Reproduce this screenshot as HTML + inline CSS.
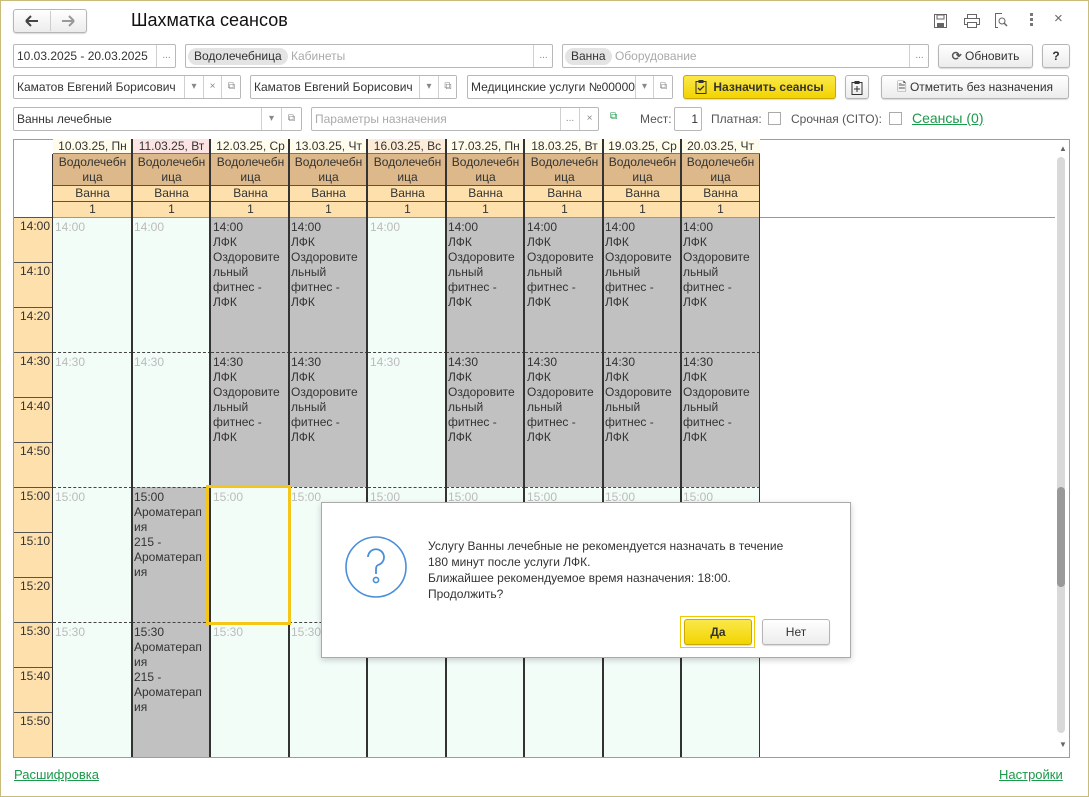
<!DOCTYPE html>
<html><head><meta charset="utf-8"><style>
*{box-sizing:border-box;margin:0;padding:0}
body{width:1089px;height:797px;background:#fff;font-family:"Liberation Sans",sans-serif;font-size:12px;color:#333;position:relative;overflow:hidden}
.a{position:absolute}
.win{left:0;top:0;width:1089px;height:797px;border:1px solid #c9bb7a}
.fld{position:absolute;height:24px;border:1px solid #b8b8b8;border-radius:2px;background:#fff;line-height:22px;padding-left:3px;font-size:12px;color:#333;white-space:nowrap;overflow:hidden}
.seg{position:absolute;top:0;height:22px;border-left:1px solid #d0d0d0;text-align:center;color:#888;font-size:10px}
.btn{position:absolute;height:24px;border:1px solid #b5b5b5;border-radius:3px;background:linear-gradient(#fff,#ececec);line-height:22px;text-align:center;font-size:12px;color:#333;box-shadow:0 1px 1px rgba(0,0,0,.15)}
.tag{display:inline-block;background:#e4e4e4;border-radius:9px;padding:0 6px;line-height:17px;margin-top:2px;color:#333}
.ph{color:#aaa}
.col{position:absolute;top:139px;width:79px;height:618px}
.d{height:15px;line-height:15px;text-align:center;background:#fffcec;border-bottom:1px solid #777}
.v{height:32px;line-height:15px;text-align:center;background:#dcb88a;padding-top:1px;border-bottom:1px solid #555}
.w{height:16px;line-height:15px;text-align:center;background:#fde0ac;border-bottom:1px solid #555}
.n{height:15px;line-height:14px;text-align:center;background:#fde0ac}
.b{height:135px;padding:2px 0 0 2px;line-height:15px;background:#f3fdf8;color:#bbb;border-top:1px dashed #444}
.g{background:#c1c1c1;color:#333}
.t{position:absolute;left:14px;width:38px;height:45px;background:#fde0ac;border-top:1px solid #555;text-align:right;padding-right:2px;line-height:15px;padding-top:1px;font-size:12px;color:#333}
.vl{position:absolute;top:139px;width:2px;height:618px;background:#333}
a{color:#1a9a4a;text-decoration:underline}
</style></head><body>
<div class="a win"></div>

<!-- toolbar -->
<div class="btn" style="left:13px;top:9px;width:74px;height:24px"></div>
<div class="a" style="left:50px;top:11px;width:1px;height:20px;background:#ccc"></div>
<svg class="a" style="left:24px;top:14px" width="16" height="14"><path d="M2 7H14M2 7L7 2M2 7L7 12" stroke="#444" stroke-width="2" fill="none"/></svg>
<svg class="a" style="left:60px;top:14px" width="16" height="14"><path d="M2 7H14M14 7L9 2M14 7L9 12" stroke="#999" stroke-width="2" fill="none"/></svg>
<div class="a" style="left:131px;top:10px;font-size:18px;color:#111">Шахматка сеансов</div>
<svg class="a" style="left:933px;top:13px" width="16" height="16"><rect x="1.5" y="1.5" width="12" height="13" fill="none" stroke="#666"/><rect x="4" y="2" width="7" height="4" fill="none" stroke="#666"/><rect x="4" y="10" width="7" height="4" fill="#666"/></svg>
<svg class="a" style="left:963px;top:13px" width="18" height="16"><rect x="4.5" y="1.5" width="9" height="4" fill="none" stroke="#666"/><rect x="1.5" y="5.5" width="15" height="6" fill="none" stroke="#666"/><rect x="4.5" y="9.5" width="9" height="5" fill="#fff" stroke="#666"/></svg>
<svg class="a" style="left:993px;top:12px" width="16" height="17"><path d="M9 1.5H2.5V15.5H5" fill="none" stroke="#666"/><circle cx="9" cy="9" r="3" fill="none" stroke="#666"/><path d="M11 11L14 14" stroke="#666" stroke-width="1.5"/></svg>
<div class="a" style="left:1030px;top:13px;width:3px;height:3px;background:#777;box-shadow:0 5px 0 #777,0 10px 0 #777"></div>
<div class="a" style="left:1054px;top:10px;font-size:15px;color:#666">×</div>

<!-- row1 -->
<div class="fld" style="left:13px;top:44px;width:163px">10.03.2025 - 20.03.2025<div class="seg" style="left:142px;width:20px">...</div></div>
<div class="fld" style="left:185px;top:44px;width:368px;padding-left:2px"><span class="tag">Водолечебница</span> <span class="ph">Кабинеты</span><div class="seg" style="left:347px;width:20px">...</div></div>
<div class="fld" style="left:562px;top:44px;width:367px;padding-left:2px"><span class="tag">Ванна</span> <span class="ph">Оборудование</span><div class="seg" style="left:346px;width:20px">...</div></div>
<div class="btn" style="left:938px;top:44px;width:95px"><span style="color:#555;font-weight:bold">⟳</span> Обновить</div>
<div class="btn" style="left:1042px;top:44px;width:28px;font-weight:bold">?</div>

<!-- row2 -->
<div class="fld" style="left:13px;top:75px;width:228px">Каматов Евгений Борисович<div class="seg" style="left:170px;width:19px;background:#fff">▾</div><div class="seg" style="left:189px;width:18px;background:#fff">×</div><div class="seg" style="left:207px;width:20px;background:#fff">⧉</div></div>
<div class="fld" style="left:250px;top:75px;width:207px">Каматов Евгений Борисович<div class="seg" style="left:168px;width:19px;background:#fff">▾</div><div class="seg" style="left:187px;width:19px;background:#fff">⧉</div></div>
<div class="fld" style="left:467px;top:75px;width:206px">Медицинские услуги №00000<div class="seg" style="left:167px;width:18px;background:#fff">▾</div><div class="seg" style="left:185px;width:20px;background:#fff">⧉</div></div>
<div class="btn" style="left:683px;top:75px;width:153px;background:linear-gradient(#fbe84a,#f2d400);border-color:#c9a800;font-weight:bold;color:#333"><svg style="vertical-align:-3px;margin-right:6px" width="12" height="15"><rect x="1" y="2.5" width="10" height="12" fill="none" stroke="#333"/><rect x="3.5" y="1" width="5" height="3" fill="#333"/><path d="M3 9l2 2 4-4" stroke="#333" fill="none" stroke-width="1.3"/></svg>Назначить сеансы</div>
<div class="btn" style="left:845px;top:75px;width:24px"><svg style="margin-top:4px" width="12" height="15"><rect x="1" y="2.5" width="10" height="12" fill="none" stroke="#333"/><rect x="3.5" y="1" width="5" height="3" fill="#333"/><path d="M6 6v6M3 9h6" stroke="#333"/></svg></div>
<div class="btn" style="left:881px;top:75px;width:188px"><span style="color:#555">🗎</span> Отметить без назначения</div>

<!-- row3 -->
<div class="fld" style="left:13px;top:107px;width:289px">Ванны лечебные<div class="seg" style="left:247px;width:20px;background:#fff">▾</div><div class="seg" style="left:267px;width:20px;background:#fff">⧉</div></div>
<div class="fld ph" style="left:311px;top:107px;width:288px;color:#aaa">Параметры назначения<div class="seg" style="left:248px;width:19px">...</div><div class="seg" style="left:267px;width:20px">×</div></div>
<div class="a" style="left:610px;top:111px;color:#1a9a4a;font-size:10px">⧉</div>
<div class="a" style="left:640px;top:112px;color:#555">Мест:</div>
<div class="fld" style="left:674px;top:107px;width:28px;text-align:right;padding-right:3px">1</div>
<div class="a" style="left:711px;top:112px;color:#555">Платная:</div>
<div class="a" style="left:768px;top:112px;width:13px;height:13px;border:1px solid #aaa;background:#fff"></div>
<div class="a" style="left:791px;top:112px;color:#555">Срочная (CITO):</div>
<div class="a" style="left:889px;top:112px;width:13px;height:13px;border:1px solid #aaa;background:#fff"></div>
<div class="a" style="left:912px;top:110px;font-size:14px"><a>Сеансы (0)</a></div>

<!-- grid -->
<div class="a" style="left:13px;top:139px;width:1057px;height:619px;border:1px solid #9d9d9d;background:#fff"></div>
<div class="a" style="left:759px;top:217px;width:296px;height:1px;background:#999"></div>
<div class="t" style="top:217px">14:00</div><div class="t" style="top:262px">14:10</div><div class="t" style="top:307px">14:20</div>
<div class="t" style="top:352px">14:30</div><div class="t" style="top:397px">14:40</div><div class="t" style="top:442px">14:50</div>
<div class="t" style="top:487px">15:00</div><div class="t" style="top:532px">15:10</div><div class="t" style="top:577px">15:20</div>
<div class="t" style="top:622px">15:30</div><div class="t" style="top:667px">15:40</div><div class="t" style="top:712px;height:45px">15:50</div>

<div class="col" style="left:53px"><div class="d">10.03.25, Пн</div><div class="v">Водолечебн<br>ица</div><div class="w">Ванна</div><div class="n">1</div><div class="b" style="border-top:1px solid #999">14:00</div><div class="b">14:30</div><div class="b">15:00</div><div class="b">15:30</div></div>
<div class="col" style="left:132px"><div class="d" style="background:#fde4e4">11.03.25, Вт</div><div class="v">Водолечебн<br>ица</div><div class="w">Ванна</div><div class="n">1</div><div class="b" style="border-top:1px solid #999">14:00</div><div class="b">14:30</div><div class="b g">15:00<br>Ароматерап<br>ия<br>215 -<br>Ароматерап<br>ия</div><div class="b g">15:30<br>Ароматерап<br>ия<br>215 -<br>Ароматерап<br>ия</div></div>
<div class="col" style="left:211px"><div class="d">12.03.25, Ср</div><div class="v">Водолечебн<br>ица</div><div class="w">Ванна</div><div class="n">1</div><div class="b g" style="border-top:1px solid #999">14:00<br>ЛФК<br>Оздоровите<br>льный<br>фитнес -<br>ЛФК</div><div class="b g">14:30<br>ЛФК<br>Оздоровите<br>льный<br>фитнес -<br>ЛФК</div><div class="b">15:00</div><div class="b">15:30</div></div>
<div class="col" style="left:289px"><div class="d">13.03.25, Чт</div><div class="v">Водолечебн<br>ица</div><div class="w">Ванна</div><div class="n">1</div><div class="b g" style="border-top:1px solid #999">14:00<br>ЛФК<br>Оздоровите<br>льный<br>фитнес -<br>ЛФК</div><div class="b g">14:30<br>ЛФК<br>Оздоровите<br>льный<br>фитнес -<br>ЛФК</div><div class="b">15:00</div><div class="b">15:30</div></div>
<div class="col" style="left:368px"><div class="d" style="background:#fdecd8">16.03.25, Вс</div><div class="v">Водолечебн<br>ица</div><div class="w">Ванна</div><div class="n">1</div><div class="b" style="border-top:1px solid #999">14:00</div><div class="b">14:30</div><div class="b">15:00</div><div class="b">15:30</div></div>
<div class="col" style="left:446px"><div class="d">17.03.25, Пн</div><div class="v">Водолечебн<br>ица</div><div class="w">Ванна</div><div class="n">1</div><div class="b g" style="border-top:1px solid #999">14:00<br>ЛФК<br>Оздоровите<br>льный<br>фитнес -<br>ЛФК</div><div class="b g">14:30<br>ЛФК<br>Оздоровите<br>льный<br>фитнес -<br>ЛФК</div><div class="b">15:00</div><div class="b">15:30</div></div>
<div class="col" style="left:525px"><div class="d">18.03.25, Вт</div><div class="v">Водолечебн<br>ица</div><div class="w">Ванна</div><div class="n">1</div><div class="b g" style="border-top:1px solid #999">14:00<br>ЛФК<br>Оздоровите<br>льный<br>фитнес -<br>ЛФК</div><div class="b g">14:30<br>ЛФК<br>Оздоровите<br>льный<br>фитнес -<br>ЛФК</div><div class="b">15:00</div><div class="b">15:30</div></div>
<div class="col" style="left:603px"><div class="d">19.03.25, Ср</div><div class="v">Водолечебн<br>ица</div><div class="w">Ванна</div><div class="n">1</div><div class="b g" style="border-top:1px solid #999">14:00<br>ЛФК<br>Оздоровите<br>льный<br>фитнес -<br>ЛФК</div><div class="b g">14:30<br>ЛФК<br>Оздоровите<br>льный<br>фитнес -<br>ЛФК</div><div class="b">15:00</div><div class="b">15:30</div></div>
<div class="col" style="left:681px"><div class="d">20.03.25, Чт</div><div class="v">Водолечебн<br>ица</div><div class="w">Ванна</div><div class="n">1</div><div class="b g" style="border-top:1px solid #999">14:00<br>ЛФК<br>Оздоровите<br>льный<br>фитнес -<br>ЛФК</div><div class="b g">14:30<br>ЛФК<br>Оздоровите<br>льный<br>фитнес -<br>ЛФК</div><div class="b">15:00</div><div class="b">15:30</div></div>

<div class="vl" style="left:52px;width:1px;top:154px;height:603px;background:#333"></div>
<div class="vl" style="left:131px"></div><div class="vl" style="left:209px"></div><div class="vl" style="left:288px"></div>
<div class="vl" style="left:366px"></div><div class="vl" style="left:445px"></div><div class="vl" style="left:523px"></div>
<div class="vl" style="left:602px"></div><div class="vl" style="left:680px"></div><div class="vl" style="left:759px;width:1px;top:154px;height:603px"></div>
<div class="a" style="left:206px;top:485px;width:85px;height:140px;border:3px solid #f5c518"></div>

<!-- scrollbar -->
<div class="a" style="left:1059px;top:144px;font-size:8px;color:#666">▲</div>
<div class="a" style="left:1057px;top:157px;width:8px;height:576px;background:#d9d9d9;border-radius:4px"></div>
<div class="a" style="left:1057px;top:487px;width:8px;height:100px;background:#999;border-radius:4px"></div>
<div class="a" style="left:1059px;top:740px;font-size:8px;color:#666">▼</div>

<!-- dialog -->
<div class="a" style="left:321px;top:502px;width:530px;height:156px;background:#fff;border:1px solid #aaa;box-shadow:0 2px 6px rgba(0,0,0,.2)"></div>
<svg class="a" style="left:344px;top:535px" width="64" height="64"><circle cx="32" cy="32" r="30" fill="none" stroke="#4a8fd8" stroke-width="1.6"/><path d="M24 22a8 8 0 1 1 10 8c-2 1-2 3-2 6v3" fill="none" stroke="#4a8fd8" stroke-width="1.8"/><circle cx="32" cy="45" r="2.6" fill="none" stroke="#4a8fd8" stroke-width="1.6"/></svg>
<div class="a" style="left:428px;top:538px;line-height:16px;color:#333">Услугу Ванны лечебные не рекомендуется назначать в течение<br>180 минут после услуги ЛФК.<br>Ближайшее рекомендуемое время назначения: 18:00.<br>Продолжить?</div>
<div class="a" style="left:680px;top:616px;width:75px;height:32px;border:1px solid #f0c800"></div>
<div class="btn" style="left:684px;top:619px;width:68px;height:26px;line-height:24px;background:linear-gradient(#fbe84a,#f2d400);border-color:#c9a800;font-weight:bold">Да</div>
<div class="btn" style="left:762px;top:619px;width:68px;height:26px;line-height:24px">Нет</div>

<!-- bottom links -->
<div class="a" style="left:14px;top:767px;font-size:13px"><a>Расшифровка</a></div>
<div class="a" style="left:999px;top:767px;font-size:13px"><a>Настройки</a></div>
</body></html>
